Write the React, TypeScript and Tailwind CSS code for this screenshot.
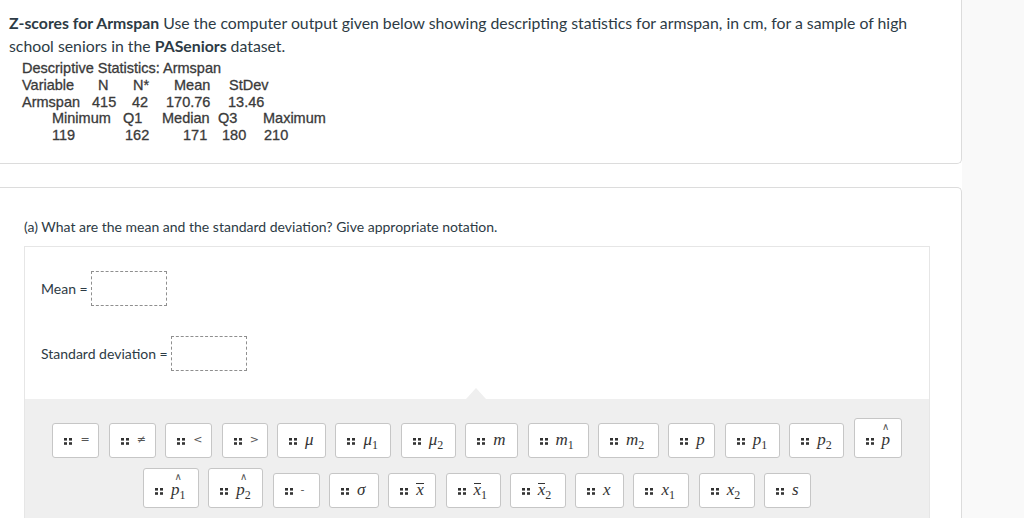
import React from 'react';

const Dots = () => (
  <svg width="8" height="7" viewBox="0 0 8 7" className="mb-[5.5px] shrink-0">
    <rect x="0" y="0" width="3" height="2.6" fill="#333" />
    <rect x="5" y="0" width="3" height="2.6" fill="#333" />
    <rect x="0" y="4.2" width="3" height="2.6" fill="#333" />
    <rect x="5" y="4.2" width="3" height="2.6" fill="#333" />
  </svg>
);

const Op = ({ children }: { children: React.ReactNode }) => (
  <span className="font-['DejaVu_Sans'] text-[11px] text-[#555]">{children}</span>
);
const V = ({ children }: { children: React.ReactNode }) => <span className="italic">{children}</span>;
const Sub = ({ children }: { children: React.ReactNode }) => (
  <span className="align-[-4px] text-[12px] leading-[0] not-italic">{children}</span>
);
const Bar = ({ children }: { children: React.ReactNode }) => (
  <span className="inline-block border-t border-[#333] leading-[12px]">{children}</span>
);
const Hat = ({ children }: { children: React.ReactNode }) => (
  <span className="inline-block text-center align-bottom">
    <span className="block h-[11px] font-['DejaVu_Sans'] text-[10px] leading-[15px] text-[#555]">∧</span>
    <span className="block leading-[20px]">{children}</span>
  </span>
);

const Btn = ({ w, children }: { w: string; children: React.ReactNode }) => (
  <div
    className={`flex min-h-[35px] items-end gap-2 rounded-[3px] border border-[#c6c6c6] bg-white pb-[7px] pl-[11px] font-['Liberation_Serif'] text-[17px] text-[#333] ${w}`}
  >
    <Dots />
    <span className="whitespace-nowrap leading-[20px]">{children}</span>
  </div>
);

const row1: [string, React.ReactNode][] = [
  ['w-[47px]', <Op>=</Op>],
  ['w-[47px]', <Op>≠</Op>],
  ['w-[47px]', <Op>&lt;</Op>],
  ['w-[46px]', <Op>&gt;</Op>],
  ['w-[49px]', <V>μ</V>],
  ['w-[56px]', <><V>μ</V><Sub>1</Sub></>],
  ['w-[55px]', <><V>μ</V><Sub>2</Sub></>],
  ['w-[53px]', <V>m</V>],
  ['w-[61px]', <><V>m</V><Sub>1</Sub></>],
  ['w-[61px]', <><V>m</V><Sub>2</Sub></>],
  ['w-[47px]', <V>p</V>],
  ['w-[55px]', <><V>p</V><Sub>1</Sub></>],
  ['w-[55px]', <><V>p</V><Sub>2</Sub></>],
  ['w-[48px]', <Hat><V>p</V></Hat>],
];

const row2: [string, React.ReactNode][] = [
  ['w-[56px]', <Hat><V>p</V><Sub>1</Sub></Hat>],
  ['w-[55px]', <Hat><V>p</V><Sub>2</Sub></Hat>],
  ['w-[47px]', <Op>-</Op>],
  ['w-[50px]', <V>σ</V>],
  ['w-[48px]', <Bar><V>x</V></Bar>],
  ['w-[55px]', <><Bar><V>x</V></Bar><Sub>1</Sub></>],
  ['w-[56px]', <><Bar><V>x</V></Bar><Sub>2</Sub></>],
  ['w-[49px]', <V>x</V>],
  ['w-[56px]', <><V>x</V><Sub>1</Sub></>],
  ['w-[56px]', <><V>x</V><Sub>2</Sub></>],
  ['w-[47px]', <V>s</V>],
];

const App = () => {
  return (
    <div className="flex min-h-[518px] bg-white font-['Lato','Liberation_Sans',sans-serif] text-[#2d3b45]">
      <div className="w-[962px] shrink-0">
        {/* question stem */}
        <section className="h-[164px] rounded-br-[5px] border-b border-r border-[#dcdcdc] pl-[9px] pr-4 pt-[11px]">
          <p className="text-[15.8px] leading-[23px]">
            <b>Z-scores for Armspan</b> Use the computer output given below showing descripting statistics for
            armspan, in cm, for a sample of high school seniors in the <b>PASeniors</b> dataset.
          </p>
          <div className="ml-[13px] mt-[3px] font-['Liberation_Sans'] text-[14.5px] leading-[16.75px] text-[#3a3a3a] [-webkit-text-stroke:0.3px_#3a3a3a]">
            <div>Descriptive Statistics: Armspan</div>
            <div className="flex">
              <span className="w-[76px]">Variable</span>
              <span className="w-[35px]">N</span>
              <span className="w-[41px]">N*</span>
              <span className="w-[55px]">Mean</span>
              <span>StDev</span>
            </div>
            <div className="flex">
              <span className="w-[70px]">Armspan</span>
              <span className="w-[40px]">415</span>
              <span className="w-[34px]">42</span>
              <span className="w-[62px]">170.76</span>
              <span>13.46</span>
            </div>
            <div className="ml-[30px] flex">
              <span className="w-[71px]">Minimum</span>
              <span className="w-[39px]">Q1</span>
              <span className="w-[56px]">Median</span>
              <span className="w-[45px]">Q3</span>
              <span>Maximum</span>
            </div>
            <div className="ml-[30px] flex">
              <span className="w-[73px]">119</span>
              <span className="w-[58px]">162</span>
              <span className="w-[39px]">171</span>
              <span className="w-[42px]">180</span>
              <span>210</span>
            </div>
          </div>
        </section>

        {/* part (a) */}
        <section className="mt-[23px] rounded-tr-[5px] border-r border-t border-[#dcdcdc] pl-6 pr-[31px] pt-[29px]">
          <p className="text-[14px] leading-[20px]">
            (a) What are the mean and the standard deviation? Give appropriate notation.
          </p>
          <div className="mt-[9px] border-l border-r border-t border-[#e6e6e6]">
            <div className="px-[16px] pb-[28px] pt-[24px] text-[14px]">
              <div className="flex items-center">
                <span>Mean =</span>
                <div className="ml-[3px] h-[35px] w-[76px] border border-dashed border-[#8f8f8f]" />
              </div>
              <div className="mt-[30px] flex items-center">
                <span>Standard deviation =</span>
                <div className="ml-[3px] h-[35px] w-[76px] border border-dashed border-[#8f8f8f]" />
              </div>
            </div>
            <div className="relative bg-[#efefef] pb-4 pt-[19px]">
              <div className="absolute left-[441px] top-[-11px] h-0 w-0 border-b-[11px] border-l-[10px] border-r-[10px] border-b-[#efefef] border-l-transparent border-r-transparent" />
              <div className="flex items-end justify-center gap-[9.4px]">
                {row1.map(([w, s], i) => (
                  <Btn key={i} w={w}>{s}</Btn>
                ))}
              </div>
              <div className="mt-[10px] flex items-end justify-center gap-[9.3px]">
                {row2.map(([w, s], i) => (
                  <Btn key={i} w={w}>{s}</Btn>
                ))}
              </div>
            </div>
          </div>
        </section>
      </div>
      <div className="flex-1 bg-[#f9f9f9]" />
    </div>
  );
};

export default App;
